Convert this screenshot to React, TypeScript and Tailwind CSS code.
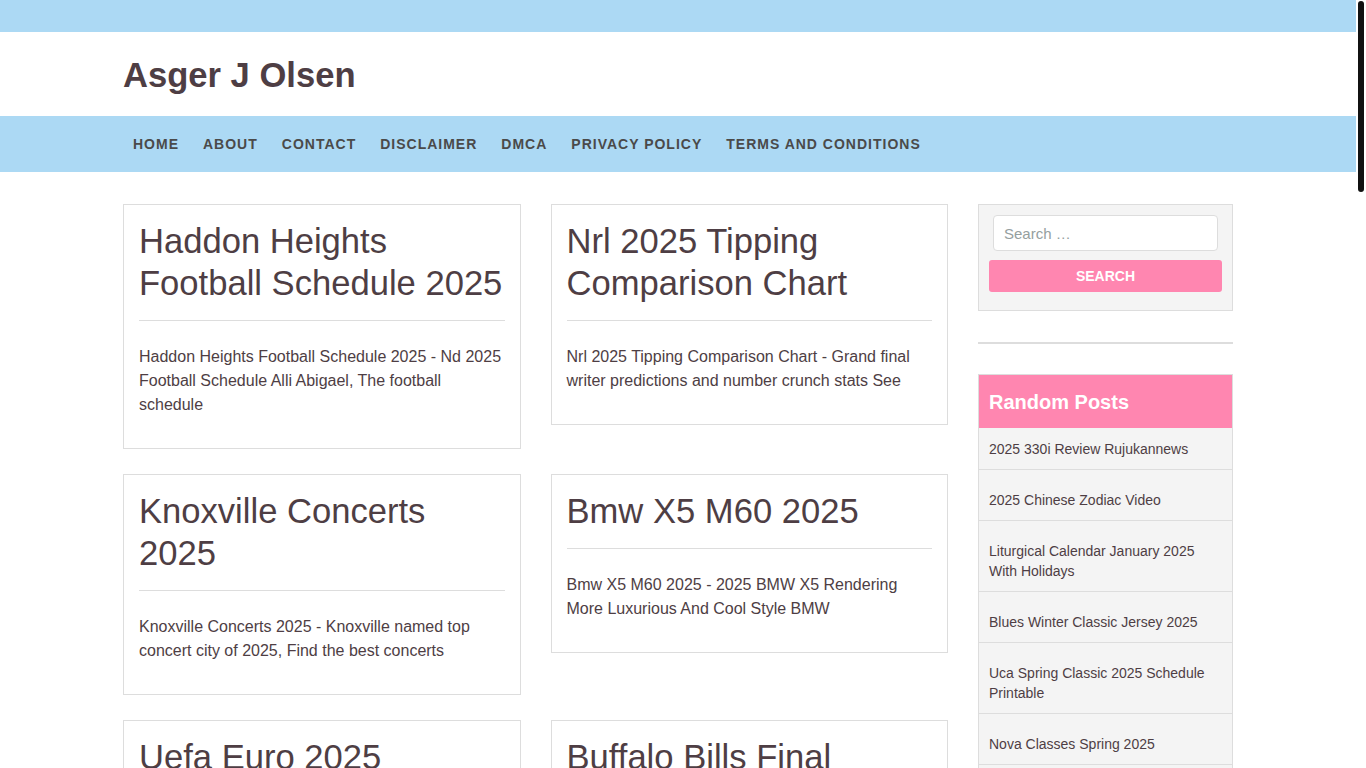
const posts = [
  {
    title: 'Haddon Heights Football Schedule 2025',
    excerpt:
      'Haddon Heights Football Schedule 2025 - Nd 2025 Football Schedule Alli Abigael, The football schedule',
  },
  {
    title: 'Nrl 2025 Tipping Comparison Chart',
    excerpt: 'Nrl 2025 Tipping Comparison Chart - Grand final writer predictions and number crunch stats See',
  },
  {
    title: 'Knoxville Concerts 2025',
    excerpt: 'Knoxville Concerts 2025 - Knoxville named top concert city of 2025, Find the best concerts',
  },
  {
    title: 'Bmw X5 M60 2025',
    excerpt: 'Bmw X5 M60 2025 - 2025 BMW X5 Rendering More Luxurious And Cool Style BMW',
  },
  {
    title: 'Uefa Euro 2025 Schedule',
    excerpt: 'Uefa Euro 2025 Schedule - Full fixture list and kick off times for every group stage match',
  },
  {
    title: 'Buffalo Bills Final Playoff Record',
    excerpt: 'Buffalo Bills Final Playoff Record - Bills rally late to win at home, Recap and highlights',
  },
  {
    title: 'Toyota Tacoma 2025 Colors',
    excerpt: 'Toyota Tacoma 2025 Colors - All new exterior paint options and trims for the new truck',
  },
  {
    title: 'Easter Sunday 2025 Date',
    excerpt: 'Easter Sunday 2025 Date - When is Easter this year and how the date is worked out',
  },
  {
    title: 'Nba Draft 2025 Mock',
    excerpt: 'Nba Draft 2025 Mock - Early look at the top prospects of the class, Latest big board',
  },
  {
    title: 'Chinese New Year 2025 Animal',
    excerpt: 'Chinese New Year 2025 Animal - The year of the wood snake, What it means for you',
  },
  {
    title: 'Honda Pilot 2025 Review',
    excerpt: 'Honda Pilot 2025 Review - Roomy three row SUV with new trim levels and features',
  },
  {
    title: 'March Madness 2025 Bracket',
    excerpt: 'March Madness 2025 Bracket - Printable bracket, Schedule and tournament dates',
  },
  {
    title: 'Ford Bronco 2025 Price',
    excerpt: 'Ford Bronco 2025 Price - Pricing for every trim and the new options packages',
  },
  {
    title: 'Super Bowl 2025 Halftime',
    excerpt: 'Super Bowl 2025 Halftime - Who is performing and when the show starts',
  },
  {
    title: 'Kia Telluride 2025 Interior',
    excerpt: 'Kia Telluride 2025 Interior - Cabin updates, Materials and new tech inside',
  },
  {
    title: 'Masters 2025 Tee Times',
    excerpt: 'Masters 2025 Tee Times - Pairings and starting times for round one at Augusta',
  },
];

const randomPosts = [
  '2025 330i Review Rujukannews',
  '2025 Chinese Zodiac Video',
  'Liturgical Calendar January 2025 With Holidays',
  'Blues Winter Classic Jersey 2025',
  'Uca Spring Classic 2025 Schedule Printable',
  'Nova Classes Spring 2025',
  'Calendar 2025 With Holidays Printable',
  'Nfl Playoff Schedule 2025',
  'Jeep Grand Cherokee 2025 Changes',
  'Spring Break 2025 Dates',
];

const nav = ['Home', 'About', 'Contact', 'Disclaimer', 'DMCA', 'Privacy Policy', 'Terms and Conditions'];

function PostCard({ title, excerpt }: { title: string; excerpt: string }) {
  return (
    <article className="border border-[#dddddd] bg-white px-[15px] pt-[15px] pb-[16px]">
      <h2 className="text-[34.6px] leading-[42px] font-normal text-[#4e3e44]">{title}</h2>
      <hr className="mt-[16px] mb-[24px] border-0 border-t border-[#dddddd]" />
      <p className="text-[16px] leading-[24px] text-[#4e3e44] mb-[15px]">{excerpt}</p>
    </article>
  );
}

export default function App() {
  return (
    <div className="w-[1356px] bg-white font-[family-name:Liberation_Sans,Arial,sans-serif] text-[#4e3e44]">
      {/* top strip */}
      <div className="h-[32px] bg-[#acd9f4]" />

      {/* header */}
      <header className="h-[84px] flex items-center">
        <div className="w-[1110px] mx-auto">
          <h1 className="text-[34.6px] leading-[40px] font-bold text-[#4e3e44] mt-[2px]">Asger J Olsen</h1>
        </div>
      </header>

      {/* nav */}
      <nav className="h-[56px] bg-[#acd9f4]">
        <ul className="w-[1110px] mx-auto h-full flex items-center gap-[4px]">
          {nav.map((item) => (
            <li key={item}>
              <a className="block px-[10px] text-[14px] font-bold uppercase tracking-[1px] text-[#4a4a4a] cursor-pointer">
                {item}
              </a>
            </li>
          ))}
        </ul>
      </nav>

      {/* main */}
      <main className="w-[1110px] mx-auto pt-[32px] pb-[40px] flex items-start gap-[30px]">
        <div className="w-[825px] grid grid-cols-2 gap-x-[30px] gap-y-[25px] items-start">
          {posts.map((p) => (
            <PostCard key={p.title} title={p.title} excerpt={p.excerpt} />
          ))}
        </div>

        <aside className="w-[255px] flex flex-col">
          {/* search */}
          <div className="border border-[#dddddd] bg-[#f4f4f4] px-[10px] pt-[10px] pb-[18px]">
            <input
              type="search"
              placeholder="Search …"
              className="block w-[225px] mx-[4px] h-[36px] rounded-[4px] border border-[#dddddd] bg-white px-[10px] text-[15px] text-[#4e3e44] placeholder:text-[#95a0a0] outline-none"
            />
            <button className="mt-[9px] w-full h-[32px] rounded-[3px] bg-[#ff86b0] text-white text-[14px] font-bold uppercase">
              Search
            </button>
          </div>

          <hr className="mt-[31px] mb-[30px] border-0 border-t-2 border-[#dddddd]" />

          {/* random posts */}
          <div className="border border-[#dddddd] bg-[#f4f4f4]">
            <h3 className="h-[53px] bg-[#ff86b0] px-[10px] flex items-center text-[20px] font-bold text-white">
              Random Posts
            </h3>
            <ul>
              {randomPosts.map((t, i) => (
                <li
                  key={t}
                  className={`border-b border-[#dddddd] px-[10px] pb-[10px] text-[14px] leading-[20px] text-[#4e3e44] ${
                    i === 0 ? 'pt-[11px]' : 'pt-[20px]'
                  }`}
                >
                  <a className="cursor-pointer">{t}</a>
                </li>
              ))}
            </ul>
          </div>
        </aside>
      </main>

      {/* footer */}
      <footer className="bg-[#acd9f4] py-[20px]">
        <div className="w-[1110px] mx-auto text-center text-[14px] text-[#4a4a4a]">
          Copyright © 2025 Asger J Olsen. All rights reserved.
        </div>
      </footer>

      {/* scrollbar thumb, drawn over the page edge */}
      <div className="fixed top-0 right-0 w-[10px] h-screen bg-white">
        <div className="mx-[2px] mt-[1px] h-[191px] w-[6px] rounded-full bg-[#111111]" />
      </div>
    </div>
  );
}
